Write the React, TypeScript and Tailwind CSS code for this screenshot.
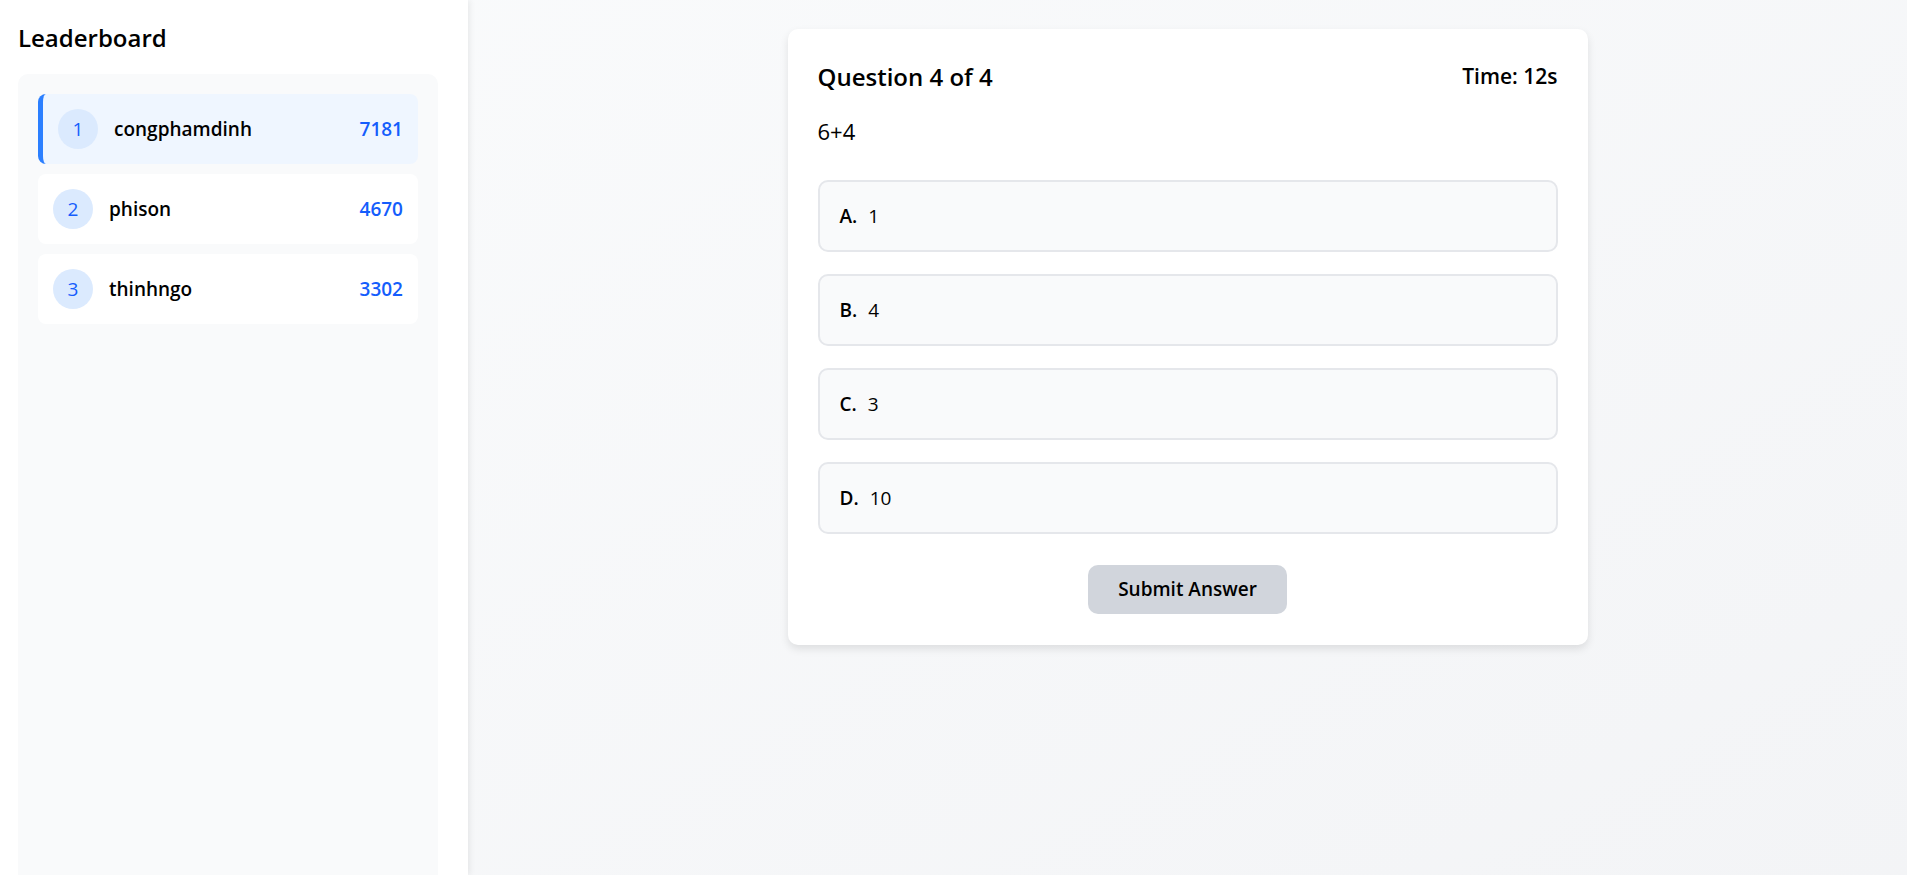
import { useState } from "react";

type Player = { rank: number; name: string; score: number };

const players: Player[] = [
  { rank: 1, name: "congphamdinh", score: 7181 },
  { rank: 2, name: "phison", score: 4670 },
  { rank: 3, name: "thinhngo", score: 3302 },
];

const options = [
  { key: "A", value: "1" },
  { key: "B", value: "4" },
  { key: "C", value: "3" },
  { key: "D", value: "10" },
];

export default function App() {
  const [selected, setSelected] = useState<string | null>(null);
  const currentUser = "congphamdinh";

  return (
    <div className="flex h-screen w-full overflow-hidden text-black font-['Open_Sans','Noto_Sans',sans-serif]">
      {/* Leaderboard sidebar */}
      <aside className="relative z-10 flex h-full w-[468px] shrink-0 flex-col overflow-hidden bg-white pl-[18px] pr-[30px] pt-[20px] shadow-[2px_0_6px_rgba(0,0,0,0.07)]">
        <h2 className="mb-[19px] text-[24px] font-semibold leading-[35px]">Leaderboard</h2>
        <div className="-mb-[20px] flex-1 rounded-[10px] bg-gray-50 p-[20px]">
          <div className="flex flex-col gap-[10px]">
            {players.map((p) => {
              const isMe = p.name === currentUser;
              return (
                <div
                  key={p.rank}
                  className={`flex h-[70px] items-center rounded-[8px] px-[15px] ${
                    isMe ? "border-l-[5px] border-blue-500 bg-blue-50" : "bg-white"
                  }`}
                >
                  <div className="flex h-[40px] w-[40px] shrink-0 items-center justify-center rounded-full bg-blue-100 text-[19px] font-medium text-blue-600">
                    {p.rank}
                  </div>
                  <span className="ml-[16px] flex-1 text-[19px] font-semibold">{p.name}</span>
                  <span className="text-[19px] font-semibold text-blue-600">{p.score}</span>
                </div>
              );
            })}
          </div>
        </div>
      </aside>

      {/* Quiz area */}
      <main className="flex-1 overflow-auto bg-gradient-to-br from-gray-50 to-gray-100 px-[30px] pt-[29px]">
        <div className="mx-auto w-full max-w-[800px] rounded-[10px] bg-white p-[30px] pb-[31px] shadow-[0_4px_8px_rgba(0,0,0,0.1)]">
          <div className="mb-[20px] flex items-center justify-between">
            <h3 className="text-[24px] font-semibold leading-[35px]">Question 4 of 4</h3>
            <span className="text-[21px] font-semibold leading-[35px]">Time: 12s</span>
          </div>
          <p className="mb-[31px] text-[22px] leading-[35px]">6+4</p>

          <div className="flex flex-col gap-[22px]">
            {options.map((o) => (
              <button
                key={o.key}
                onClick={() => setSelected(o.key)}
                className={`flex h-[72px] items-center rounded-[10px] border-2 px-[20px] text-left text-[19px] ${
                  selected === o.key ? "border-blue-500 bg-blue-50" : "border-gray-200 bg-gray-50"
                }`}
              >
                <span className="mr-[11px] font-semibold">{o.key}.</span>
                <span>{o.value}</span>
              </button>
            ))}
          </div>

          <div className="mt-[31px] flex justify-center">
            <button className="h-[49px] rounded-[10px] bg-gray-300 px-[30px] text-[19px] font-semibold">
              Submit Answer
            </button>
          </div>
        </div>
      </main>
    </div>
  );
}
